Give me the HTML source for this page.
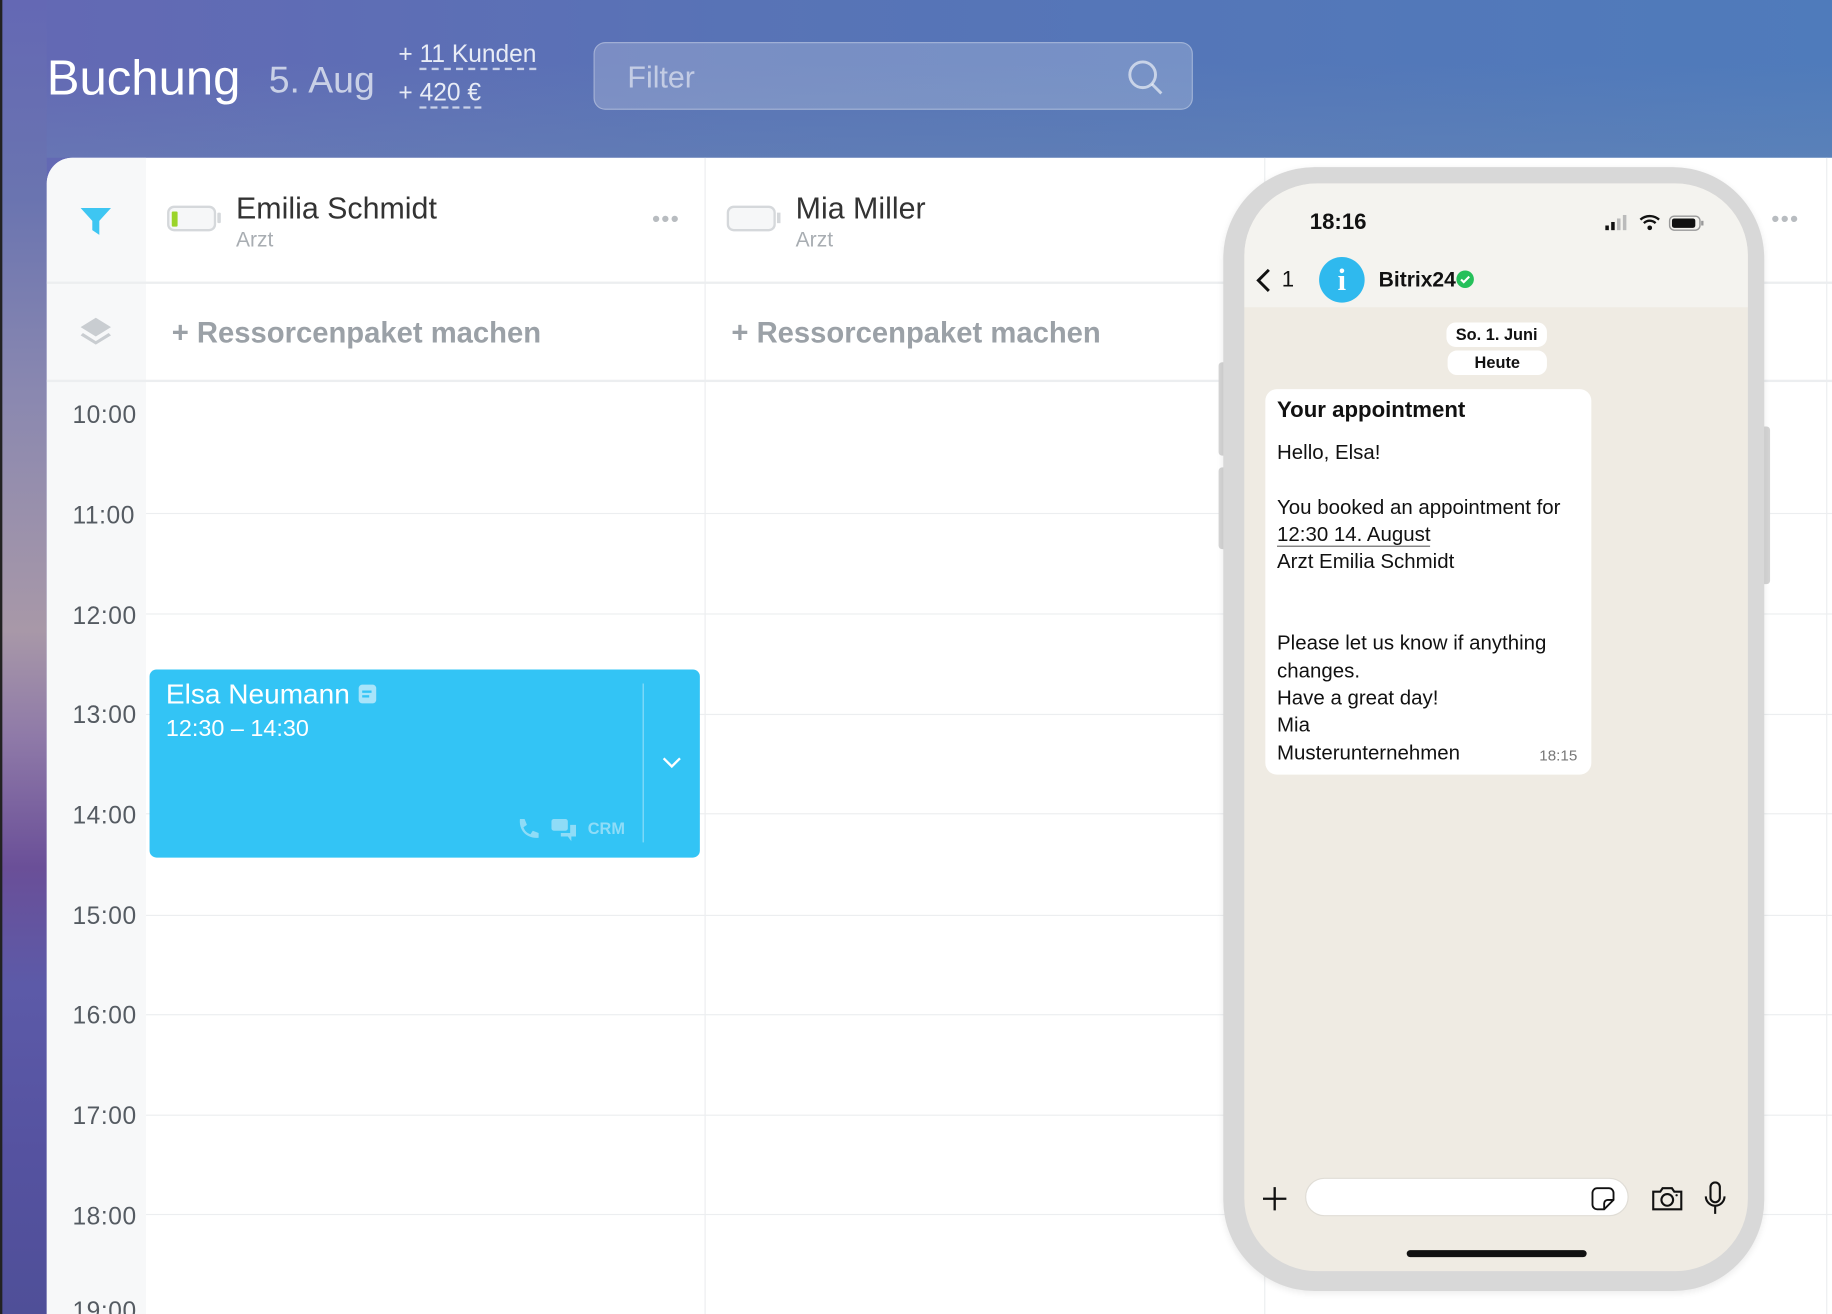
<!DOCTYPE html>
<html><head><meta charset="utf-8"><style>
*{margin:0;padding:0;box-sizing:border-box}
html,body{width:1832px;height:1314px;overflow:hidden}
body{font-family:"Liberation Sans",sans-serif;background:#5b72b6}
#w{position:absolute;left:0;top:0;width:1568px;height:1125px;transform:scale(1.16837);transform-origin:0 0;overflow:hidden;
background:linear-gradient(90deg,#6468b4 0%,#5873b6 40%,#4f7bbb 100%)}
.bgl{position:absolute;left:0;top:0;width:40px;height:1125px;background:linear-gradient(180deg,#6468b4 0%,#6a74b0 15%,#8a88b0 30%,#a898a8 48%,#8f7aa8 56%,#6a4f98 66%,#5c5aa8 75%,#5552a0 88%,#4f4f98 100%)}
.bgl:before{content:"";position:absolute;left:0;top:0;width:2px;height:100%;background:#222}
.bgt{position:absolute;left:40px;top:0;width:1528px;height:135px;background:linear-gradient(180deg,rgba(0,0,0,0) 40%,rgba(110,140,180,.35) 100%)}
.a{position:absolute;white-space:nowrap}
.card{position:absolute;left:40px;top:135px;width:1540px;height:1000px;background:#fff;border-top-left-radius:22px;overflow:hidden}
.lc{position:absolute;left:0;top:0;width:85px;height:1000px;background:#f7f8f9}
.hl{position:absolute;height:2px;background:#eceef0}
.vl{position:absolute;width:1px;background:#eceef0}
.t{position:absolute;left:22px;font-size:21px;color:#555b62;letter-spacing:.5px}
.dots{position:absolute;font-size:20px;color:#b8bcc0;letter-spacing:1px}
.pk{position:absolute;font-size:25px;font-weight:bold;color:#9ba1a7}
</style></head><body><div id="w">
<div class="bgl"></div><div class="bgt"></div>
<div class="a" style="left:40px;top:43px;font-size:42px;color:#fff">Buchung</div>
<div class="a" style="left:230px;top:50px;font-size:32px;color:#c9d0e6">5. Aug</div>
<div class="a" style="left:341px;top:35px;font-size:21px;color:#e8ecf6">+ <span style="border-bottom:2px dashed #c8d0e8">11 Kunden</span></div>
<div class="a" style="left:341px;top:68px;font-size:21px;color:#e8ecf6">+ <span style="border-bottom:2px dashed #c8d0e8">420 €</span></div>
<div class="a" style="left:508px;top:36px;width:513px;height:58px;border-radius:10px;background:rgba(255,255,255,.2);border:1.5px solid rgba(255,255,255,.3)"></div>
<div class="a" style="left:537px;top:51px;font-size:26px;color:rgba(255,255,255,.55)">Filter</div>
<svg class="a" style="left:964px;top:50px" width="32" height="32" viewBox="0 0 32 32"><circle cx="14" cy="14" r="11" fill="none" stroke="rgba(255,255,255,.6)" stroke-width="2.5"/><line x1="22" y1="22" x2="30" y2="30" stroke="rgba(255,255,255,.6)" stroke-width="2.5"/></svg>

<div class="card">
<div class="lc"></div>
<div class="hl" style="left:0;top:106px;width:1540px"></div>
<div class="hl" style="left:0;top:190px;width:1540px"></div>
<div class="vl" style="left:563px;top:0;height:1000px"></div>
<div class="vl" style="left:1042px;top:0;height:1000px"></div>
<div class="vl" style="left:1523px;top:0;height:1000px"></div>
<div class="hl" style="left:85px;top:304px;width:1460px;height:1px"></div>
<div class="hl" style="left:85px;top:390px;width:1460px;height:1px"></div>
<div class="hl" style="left:85px;top:476px;width:1460px;height:1px"></div>
<div class="hl" style="left:85px;top:561px;width:1460px;height:1px"></div>
<div class="hl" style="left:85px;top:648px;width:1460px;height:1px"></div>
<div class="hl" style="left:85px;top:733px;width:1460px;height:1px"></div>
<div class="hl" style="left:85px;top:819px;width:1460px;height:1px"></div>
<div class="hl" style="left:85px;top:904px;width:1460px;height:1px"></div>
<div class="hl" style="left:85px;top:990px;width:1460px;height:1px"></div>
<div class="t" style="top:209px">10:00</div><div class="t" style="top:295px">11:00</div><div class="t" style="top:381px">12:00</div>
<div class="t" style="top:466px">13:00</div><div class="t" style="top:552px">14:00</div><div class="t" style="top:638px">15:00</div>
<div class="t" style="top:723px">16:00</div><div class="t" style="top:809px">17:00</div><div class="t" style="top:895px">18:00</div>
<div class="t" style="top:976px">19:00</div>
<svg class="a" style="left:28px;top:40px" width="28" height="28" viewBox="0 0 28 28"><path d="M1 3h26L17 14v12l-6-4V14z" fill="#3ec6f2"/></svg>
<svg class="a" style="left:27px;top:135px" width="30" height="30" viewBox="0 0 30 30"><path d="M15 2L28 10 15 18 2 10z" fill="#c9cdd1"/><path d="M4 15l11 7 11-7 2 2-13 8-13-8z" fill="#c9cdd1"/></svg>
<div class="a" style="left:103px;top:41px;width:42px;height:22px;border:2px solid #d5d8db;border-radius:6px;background:#f6f7f8"><div style="position:absolute;left:2px;top:3px;width:5px;height:13px;background:#9bd42a;border-radius:1px"></div></div>
<div class="a" style="left:146px;top:47px;width:3px;height:9px;background:#d5d8db;border-radius:1px"></div>
<div class="a" style="left:162px;top:28px;font-size:26px;color:#333">Emilia Schmidt</div>
<div class="a" style="left:162px;top:60px;font-size:18px;color:#a8adb2">Arzt</div>
<div class="dots" style="left:518px;top:42px">•••</div>
<div class="a" style="left:582px;top:41px;width:42px;height:22px;border:2px solid #d5d8db;border-radius:6px;background:#f6f7f8"></div>
<div class="a" style="left:625px;top:47px;width:3px;height:9px;background:#d5d8db"></div>
<div class="a" style="left:641px;top:28px;font-size:26px;color:#333">Mia Miller</div>
<div class="a" style="left:641px;top:60px;font-size:18px;color:#a8adb2">Arzt</div>
<div class="dots" style="left:1476px;top:42px">•••</div>
<div class="pk" style="left:107px;top:136px">+ Ressorcenpaket machen</div>
<div class="pk" style="left:586px;top:136px">+ Ressorcenpaket machen</div>
<div class="a" style="left:88px;top:438px;width:471px;height:161px;background:#33c4f5;border-radius:6px">
 <div class="a" style="left:14px;top:8px;font-size:24px;color:#fff">Elsa Neumann</div>
 <div class="a" style="left:179px;top:13px;width:15px;height:16px;background:#a8e4fa;border-radius:3px"><div style="position:absolute;left:3px;top:5px;width:8px;height:2px;background:#33c4f5"></div><div style="position:absolute;left:3px;top:9px;width:6px;height:2px;background:#33c4f5"></div></div>
 <div class="a" style="left:14px;top:40px;font-size:20px;color:#fff">12:30 – 14:30</div>
 <div class="a" style="left:422px;top:12px;width:1px;height:136px;background:rgba(255,255,255,.45)"></div>
 <svg class="a" style="left:438px;top:74px" width="18" height="12" viewBox="0 0 18 12"><path d="M2 2l7 7 7-7" fill="none" stroke="#fff" stroke-width="2"/></svg>
 <svg class="a" style="left:313px;top:126px" width="22" height="22" viewBox="0 0 22 22"><path d="M4 2l4 0 2 5-3 2c1 3 3 5 6 6l2-3 5 2v4c-10 1-17-6-16-16z" fill="#8fdcf7"/></svg>
 <svg class="a" style="left:343px;top:126px" width="24" height="22" viewBox="0 0 24 22"><rect x="1" y="2" width="14" height="10" rx="2" fill="#8fdcf7"/><path d="M17 7h5v10h-4v4l-3-4h-6v-3h8z" fill="#8fdcf7"/></svg>
 <div class="a" style="left:375px;top:128px;font-size:14px;font-weight:bold;color:#8fdcf7">CRM</div>
</div>
</div>

<!-- phone -->
<div class="a" style="left:1043px;top:310px;width:8px;height:80px;background:#d4d4d4;border-radius:3px"></div>
<div class="a" style="left:1043px;top:400px;width:8px;height:70px;background:#d4d4d4;border-radius:3px"></div>
<div class="a" style="left:1506px;top:365px;width:9px;height:135px;background:#d4d4d4;border-radius:3px"></div>
<div class="a" style="left:1047px;top:143px;width:463px;height:962px;background:#d8d8d8;border-radius:78px;box-shadow:0 2px 6px rgba(0,0,0,.08)"></div>
<div class="a" style="left:1065px;top:157px;width:431px;height:931px;background:#efebe3;border-radius:62px;overflow:hidden">
 <div class="a" style="left:0;top:0;width:431px;height:106px;background:#f4f3ef"></div>
 <div class="a" style="left:56px;top:23px;font-size:19px;font-weight:bold;color:#111">18:16</div>
 <svg class="a" style="left:307px;top:26px" width="90" height="16" viewBox="0 0 90 16"><rect x="2" y="10" width="3" height="4" fill="#111"/><rect x="7" y="7" width="3" height="7" fill="#111"/><rect x="12" y="4" width="3" height="10" fill="#bbb"/><rect x="17" y="1" width="3" height="13" fill="#bbb"/><path d="M32 5a12 12 0 0 1 16 0M35 8a7 7 0 0 1 10 0" fill="none" stroke="#111" stroke-width="2"/><circle cx="40" cy="12" r="2" fill="#111"/><rect x="57" y="2" width="26" height="12" rx="4" fill="none" stroke="#999" stroke-width="1.2"/><rect x="59" y="4" width="20" height="8" rx="2" fill="#111"/><rect x="84" y="6" width="2" height="4" fill="#999"/></svg>
 <svg class="a" style="left:8px;top:71px" width="18" height="24" viewBox="0 0 18 24"><path d="M13 3L4 12l9 9" fill="none" stroke="#111" stroke-width="2.5"/></svg>
 <div class="a" style="left:32px;top:72px;font-size:19px;color:#111">1</div>
 <div class="a" style="left:64px;top:63px;width:39px;height:39px;border-radius:50%;background:#2fb9ee;color:#fff;font-family:'Liberation Serif',serif;font-weight:bold;font-size:26px;text-align:center;line-height:39px">i</div>
 <div class="a" style="left:115px;top:72px;font-size:18px;font-weight:bold;color:#111">Bitrix24</div>
 <svg class="a" style="left:181px;top:74px" width="16" height="16" viewBox="0 0 16 16"><circle cx="8" cy="8" r="7.5" fill="#25c05a"/><path d="M4.5 8.2l2.3 2.3 4.7-4.7" fill="none" stroke="#fff" stroke-width="1.8"/></svg>
 <div class="a" style="left:173px;top:119px;width:86px;height:21px;background:#fff;border-radius:8px;font-size:14px;font-weight:bold;text-align:center;line-height:21px;color:#111">So. 1. Juni</div>
 <div class="a" style="left:174px;top:143px;width:85px;height:21px;background:#fff;border-radius:8px;font-size:14px;font-weight:bold;text-align:center;line-height:21px;color:#111">Heute</div>
 <div class="a" style="left:18px;top:176px;width:279px;height:330px;background:#fff;border-radius:10px;color:#111;font-size:17.5px;line-height:23.3px;padding:7px 10px;white-space:normal">
  <div style="font-weight:bold;font-size:19px;margin-bottom:13px">Your appointment</div>
  Hello, Elsa!<br><br>You booked an appointment for<br><span style="border-bottom:1px solid #666">12:30 14. August</span><br>Arzt Emilia Schmidt<br><br><br>Please let us know if anything<br>changes.<br>Have a great day!<br>Mia<br>Musterunternehmen
  <div class="a" style="right:12px;bottom:5px;font-size:13px;color:#777">18:15</div>
 </div>
 <svg class="a" style="left:14px;top:857px" width="24" height="24" viewBox="0 0 24 24"><path d="M12 2v20M2 12h20" stroke="#111" stroke-width="2"/></svg>
 <div class="a" style="left:52px;top:851px;width:277px;height:33px;background:#fff;border:1px solid #e0ddd6;border-radius:17px"></div>
 <svg class="a" style="left:296px;top:858px" width="22" height="22" viewBox="0 0 22 22"><path d="M6 2h10a4 4 0 0 1 4 4v6l-8 8H6a4 4 0 0 1-4-4V6a4 4 0 0 1 4-4zM20 12h-5a3 3 0 0 0-3 3v5" fill="none" stroke="#111" stroke-width="1.6"/></svg>
 <svg class="a" style="left:348px;top:856px" width="28" height="24" viewBox="0 0 28 24"><path d="M2 7h6l2-3h8l2 3h6v15H2z" fill="none" stroke="#111" stroke-width="1.8"/><circle cx="14" cy="14" r="5" fill="none" stroke="#111" stroke-width="1.8"/><circle cx="22" cy="10" r="1" fill="#111"/></svg>
 <svg class="a" style="left:393px;top:854px" width="20" height="30" viewBox="0 0 20 30"><rect x="6" y="1" width="8" height="17" rx="4" fill="none" stroke="#111" stroke-width="1.8"/><path d="M2 13a8 8 0 0 0 16 0M10 21v7" fill="none" stroke="#111" stroke-width="1.8"/></svg>
 <div class="a" style="left:139px;top:913px;width:154px;height:6px;border-radius:3px;background:#111"></div>
</div>
</div></body></html>
